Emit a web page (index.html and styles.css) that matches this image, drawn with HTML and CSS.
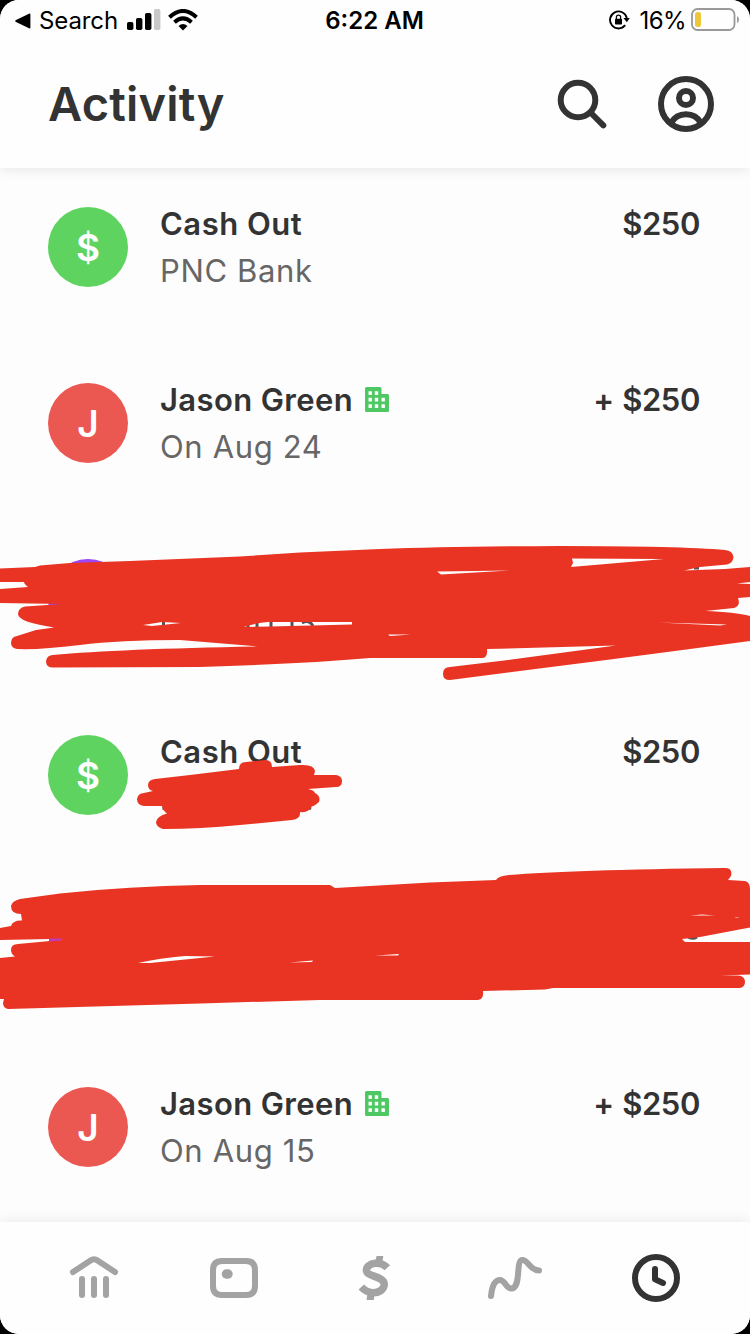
FILE: index.html
```
<!DOCTYPE html>
<html lang="en">
<head>
    <meta charset="UTF-8">
    <meta name="viewport" content="width=device-width, initial-scale=1.0">
    <title>Activity</title>
    <link rel="stylesheet" href="styles.css">
</head>
<body>
<div class="screen">

    <!-- Header -->
    <header class="header">
        <div class="status-bar">
            <div class="status-left">
                <svg class="back-arrow" width="16" height="16" viewBox="0 0 16 16"><path d="M1 7.1 14 .7Q15.4 0 15.4 1.5v13q0 1.5-1.4.8L1 8.9Q-.6 8 1 7.1Z"/></svg>
                <span class="back-label">Search</span>
                <svg class="signal" width="34" height="22" viewBox="0 0 34 22">
                    <rect x="0" y="13" width="6.4" height="8" rx="1.8"/>
                    <rect x="9" y="9" width="6.4" height="12" rx="1.8"/>
                    <rect x="18" y="4" width="6.4" height="17" rx="1.8"/>
                    <rect x="27" y="0" width="6.4" height="21" rx="1.8" fill="#c8c8c8"/>
                </svg>
                <svg class="wifi" width="30" height="22" viewBox="0 0 30 22" fill="none" stroke="#000" stroke-width="4">
                    <path d="M1.5 8.2Q15-4.2 28.5 8.2"/>
                    <path d="M6.5 13.2Q15 5.6 23.5 13.2"/>
                    <path d="M10.5 17Q15 13.2 19.5 17L15 21.5Z" fill="#000" stroke="none"/>
                </svg>
            </div>
            <div class="status-time">6:22 AM</div>
            <div class="status-right">
                <svg class="lock" width="21" height="20" viewBox="0 0 21 20">
                    <path d="M16.2 15.2A8.5 8.5 0 1 1 17.8 8" fill="none" stroke="#000" stroke-width="1.9"/>
                    <path d="M14.5 8h6.3l-3 4.3Z"/>
                    <rect x="6" y="8.8" width="7" height="5.6" rx=".7"/>
                    <path d="M7.4 9V7.3a2.1 2.1 0 0 1 4.2 0V9" fill="none" stroke="#000" stroke-width="1.3"/>
                </svg>
                <span class="battery-label">16%</span>
                <svg class="battery" width="49" height="24" viewBox="0 0 49 24">
                    <rect x="1" y="1" width="42.5" height="21" rx="5.5" fill="none" stroke="#999" stroke-width="1.8"/>
                    <rect x="4" y="4" width="6" height="15" rx="2.5" fill="#ecc73c"/>
                    <path d="M46 8q2 1 2 3.5T46 15Z" fill="#999"/>
                </svg>
            </div>
        </div>
        <div class="title-bar">
            <h1>Activity</h1>
            <svg class="search-icon" width="52" height="52" viewBox="0 0 52 52" fill="none" stroke="#333" stroke-width="6" stroke-linecap="round">
                <circle cx="22" cy="22" r="17.3"/>
                <path d="M35 35 47.3 47.3"/>
            </svg>
            <svg class="profile-icon" width="56" height="56" viewBox="0 0 56 56" fill="none" stroke="#333" stroke-width="6">
                <circle cx="28" cy="28" r="25"/>
                <circle cx="28" cy="22" r="7"/>
                <path d="M13 47Q18 38.2 28 38.2T43 47"/>
            </svg>
        </div>
    </header>

    <!-- Activity list -->
    <main class="activity">
        <div class="item">
            <div class="avatar green">$</div>
            <div class="details">
                <p class="name cash">Cash Out</p>
                <p class="note">PNC Bank</p>
            </div>
            <div class="amount">$250</div>
        </div>
        <div class="item">
            <div class="avatar red">J</div>
            <div class="details">
                <p class="name">Jason Green
                    <svg class="business" width="24" height="25" viewBox="0 0 24 25"><path fill="#4ec863" fill-rule="evenodd" d="M1.5 0H15q1.5 0 1.5 1.5V7H22.5Q24 7 24 8.5v15Q24 25 22.5 25h-21Q0 25 0 23.5v-22Q0 0 1.5 0ZM3.5 4.2v3.8h3.4V4.2ZM9.8 4.2v3.8h3.4V4.2ZM3.5 10.7v3.8h3.4v-3.8ZM9.8 10.7v3.8h3.4v-3.8ZM16.5 10.7v3.8h3.4v-3.8ZM3.5 17.2v3.8h3.4v-3.8ZM9.8 17.2v3.8h3.4v-3.8ZM16.5 17.2v3.8h3.4v-3.8Z"/></svg>
                </p>
                <p class="note">On Aug 24</p>
            </div>
            <div class="amount">+ $250</div>
        </div>
        <div class="item">
            <div class="avatar purple"></div>
        </div>
        <div class="item">
            <div class="avatar green">$</div>
            <div class="details">
                <p class="name cash">Cash Out</p>
            </div>
            <div class="amount">$250</div>
        </div>
        <div class="item">
            <div class="avatar purple"></div>
        </div>
        <div class="item">
            <div class="avatar red">J</div>
            <div class="details">
                <p class="name">Jason Green
                    <svg class="business" width="24" height="25" viewBox="0 0 24 25"><path fill="#4ec863" fill-rule="evenodd" d="M1.5 0H15q1.5 0 1.5 1.5V7H22.5Q24 7 24 8.5v15Q24 25 22.5 25h-21Q0 25 0 23.5v-22Q0 0 1.5 0ZM3.5 4.2v3.8h3.4V4.2ZM9.8 4.2v3.8h3.4V4.2ZM3.5 10.7v3.8h3.4v-3.8ZM9.8 10.7v3.8h3.4v-3.8ZM16.5 10.7v3.8h3.4v-3.8ZM3.5 17.2v3.8h3.4v-3.8ZM9.8 17.2v3.8h3.4v-3.8ZM16.5 17.2v3.8h3.4v-3.8Z"/></svg>
                </p>
                <p class="note">On Aug 15</p>
            </div>
            <div class="amount">+ $250</div>
        </div>
    </main>

    <!-- Bottom navigation -->
    <nav class="tabs">
        <a href="#" class="tab" aria-label="Banking">
            <svg width="56" height="56" viewBox="66 1250 56 56">
                <path d="M73 1272 90.5 1260.5Q94 1258 97.5 1260.5L115 1272M82 1279v16M94 1279v16M106 1279v16"/>
            </svg>
        </a>
        <a href="#" class="tab" aria-label="Card">
            <svg width="56" height="56" viewBox="206 1250 56 56">
                <path d="M222 1261h24q9 0 9 9v16q0 9-9 9h-24q-9 0-9-9v-16q0-9 9-9Z"/>
                <rect class="solid" x="221.700" y="1269.300" width="11" height="9.400" rx="4.600"/>
            </svg>
        </a>
        <a href="#" class="tab" aria-label="Money">
            <svg width="56" height="56" viewBox="346 1250 56 56">
                <path class="flat" d="M387.3 1267.8C384 1264.300 379.500 1263 375.500 1263.300 369.500 1263.800 366 1267 366.500 1270.800 367.500 1277 384.300 1276 384.300 1284.300 384 1290 378.500 1293 372.500 1292.700 368 1292.300 364.300 1290.300 361.300 1287"/>
                <path class="solid" d="M376.500 1256h6.800l-1.200 8h-7ZM367.800 1291h7.200l-1.200 9h-7.300Z"/>
            </svg>
        </a>
        <a href="#" class="tab" aria-label="Investing">
            <svg width="60" height="56" viewBox="484 1250 60 56">
                <path d="M491 1296C492 1286 495 1280 500 1280 505 1280 506 1288.5 511 1288.5 522 1288.5 515 1260 522.5 1260 528 1260 530 1270.5 539 1270.5"/>
            </svg>
        </a>
        <a href="#" class="tab active" aria-label="Activity">
            <svg width="56" height="56" viewBox="626 1250 56 56">
                <circle cx="656" cy="1278" r="21"/>
                <path d="M655 1269v10.3l8 3.7"/>
            </svg>
        </a>
    </nav>

    <!-- Marker strokes over the private rows -->
    <svg class="scribbles" width="750" height="1334" viewBox="0 0 750 1334" fill="#e93323" fill-rule="evenodd">
        <path class="ink" d="M163.5 620v7M248 621v6M257 621v6M271 621v6M292 621v6M302 623q7-4 11 3M694 568h5M164 805v5M306 806l5 3M687 936q5 4 10 1"/>
        <path d="M0 568.5 35 567 40 565.5 70 563 130 561 240 556.500 300 552.5 380 549Q450 546.5 560 546 680 546 725 550 733 551 733.5 557 733 563 727 564.5L700 567 684 570.5 725 569 750 567V597L738 598Q741 606 734 608L705 611Q735 612 750 616V641L690 649 610 659.5 450 680Q443 680 443 674 443 667 450 667L500 661 616 645.5 487 649Q488 658 482 658H370Q300 664 200 667L52 667.5Q46 667 46 661 47 655 53 655 120 649 258 646.5L180 640Q120 640 80 645 40 650 17 649 11 648 11 643 11 637 17 636L36 630 54 627.5Q18 622 18 614 18 608 25 606.5L62 604 0 603V589L28 587Q24 584 24 582H0Z
            M143 625 162 622 181 623 152 626ZM244 627Q255 623 268 622H352V624.5L270 626.5ZM437 571.5 510 570.5 441 574.5ZM572 558.5 664 559 571 567 573 563ZM388 634.5 411 634.5 390 636ZM658 622.5 727 624.5 720 625.5ZM737 583.5 750 582V584Z"/>
        <path d="M155 779 190 775 239 769Q239 762 246 762L265 760Q272 760 272 767L300 765Q314 764 315 771L314 775H336Q342 776 342 781 342 787 336 787L308 789Q314 790 315 793 321 796 319 802 315 806 311 807 309 813 300 812 301 819 292 820L240 825Q200 829 163 829 156 827 156 822 157 816 167 813.5 163 811 162 806H144Q137 805 137 799 138 793 144 793L153 791Q148 790 148 785 148 780 155 779Z"/>
        <path d="M20 899 60 893.5Q130 886 200 885H330L335 888 370 886 430 882.5 496 880Q498 876 509 875 570 870 725 868 733 868 731 876L728 880 745 881Q750 882 750 889V927.5L700 937 682 939 685 942H750V974.5L720 975.5H738Q745 976 745 982 745 987 740 988H553L545 989.5 483 991Q484 999 478 1000H320L200 1003.5 8 1009Q3 1008 3 1003L4 999H0V958L15 956.5Q11 954 11 950 11 944 18 944L50 941V939L0 940V928L11 926Q13 920 22 920.5L21 914Q11 914 11 906 12 901 20 899Z
            M138 963Q160 958 185 956L215 956.5 150 963ZM289 962.5 313 960.5 312 962ZM375 955.5 399 954 398 955.5ZM690 915.5 702 914.5 715 915.5ZM735 917.5 740 917 736 918Z"/>
        <path d="M49 938.5H62V940.5L49 941.5Z" fill="#c33bb5"/>
    </svg>

</div>
</body>
</html>
```
FILE: styles.css
```
body {
    margin: 0;
    background-color: #000;
    font-family: Inter, "Liberation Sans", sans-serif;
    color: #333;
}

h1, p {
    margin: 0;
}

.screen {
    position: relative;
    display: flex;
    flex-direction: column;
    width: 750px;
    height: 1334px;
    overflow: hidden;
    background-color: #fdfdfd;
    border-radius: 19px;
}

/* Header */
.header {
    flex-shrink: 0;
    height: 168px;
    background-color: #fefefe;
    box-shadow: 0 2px 12px rgba(0, 0, 0, 0.09);
}

.status-bar {
    display: grid;
    grid-template-columns: 1fr auto 1fr;
    align-items: center;
    height: 40px;
    padding: 0 10px 0 14px;
    color: #000;
    font-size: 24px;
}

.status-left,
.status-right {
    display: flex;
    align-items: center;
}

.status-left {
    padding-top: 1px;
}

.status-right {
    justify-content: flex-end;
}

.back-arrow {
    margin-left: 1px;
}

.back-label {
    margin: 0 9px 0 8px;
    letter-spacing: -0.1px;
}

.signal {
    margin-top: -2px;
}

.wifi {
    margin: -1px 0 0 7px;
}

.status-time {
    padding-top: 1px;
    margin-right: 5px;
    font-weight: 600;
    letter-spacing: 0;
}

.lock {
    margin-right: 10px;
}

.battery-label {
    padding-top: 1px;
    margin-right: 5px;
    letter-spacing: -0.6px;
}

/* Title row */
.title-bar {
    display: flex;
    align-items: center;
    height: 128px;
    padding: 0 36px 0 48px;
}

.title-bar h1 {
    flex: 1;
    font-size: 47px;
    font-weight: 600;
    line-height: 56px;
    letter-spacing: 0.2px;
}

.search-icon {
    margin-right: 50px;
}

/* Activity list */
.activity {
    flex: 1;
    min-height: 0;
    padding: 39px 50px 0 48px;
}

.item {
    display: flex;
    height: 176px;
}

.avatar {
    display: flex;
    align-items: center;
    justify-content: center;
    width: 80px;
    height: 80px;
    margin-right: 32px;
    border-radius: 50%;
    color: #fff;
    font-size: 37px;
    font-weight: 600;
}

.green {
    background-color: #5fd360;
}

.red {
    background-color: #eb5852;
}

.purple {
    background-color: #a044f5;
}

.details {
    flex: 1;
}

.name,
.amount {
    font-size: 31px;
    font-weight: 600;
    line-height: 34px;
}

.name {
    letter-spacing: 0.38px;
}

.cash {
    letter-spacing: 0.5px;
}

.amount {
    letter-spacing: -0.4px;
    word-spacing: 1px;
}

.note {
    margin-top: 13px;
    color: #666;
    font-size: 31px;
    line-height: 34px;
    letter-spacing: 0.65px;
}

.business {
    position: relative;
    top: 1px;
    margin-left: 4px;
}

/* Bottom navigation */
.tabs {
    display: flex;
    flex-shrink: 0;
    align-items: center;
    height: 112px;
    padding-left: 24px;
    background-color: #fefefe;
    box-shadow: 0 -2px 12px rgba(0, 0, 0, 0.07);
}

.tab {
    display: flex;
    justify-content: center;
    width: 140px;
    color: #a3a3a3;
}

.tab.active {
    color: #333;
}

.tab svg {
    fill: none;
    stroke: currentColor;
    stroke-width: 6;
    stroke-linecap: round;
    stroke-linejoin: round;
}

.tab .solid {
    fill: currentColor;
    stroke: none;
}

.tab .flat {
    stroke-width: 7.5;
    stroke-linecap: butt;
}

/* Marker strokes */
.scribbles {
    position: absolute;
    top: 0;
    left: 0;
    pointer-events: none;
}

.ink {
    fill: none;
    stroke: #555;
    stroke-width: 3;
}
```
